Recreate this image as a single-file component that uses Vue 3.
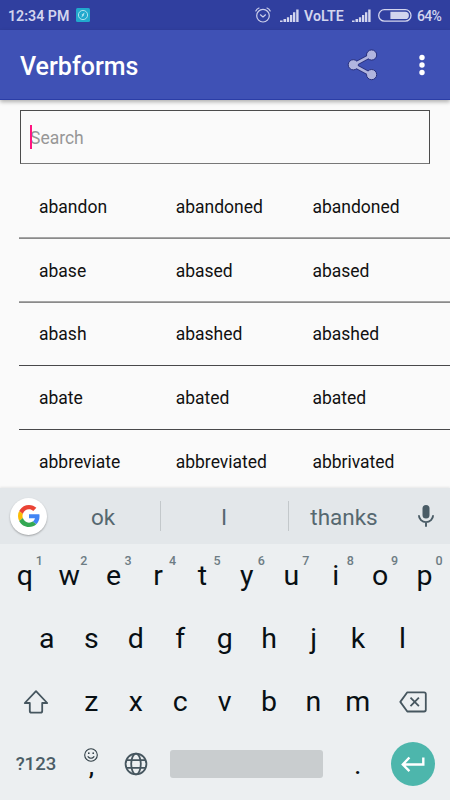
<template>
  <div class="screen">
    <div class="status-bar">
      <span class="clock">12:34 PM</span>
      <svg class="app-badge" viewBox="0 0 14 14" aria-hidden="true">
        <rect width="14" height="14" rx="1.5" fill="#21a9cd" />
        <circle cx="7" cy="7" r="4.6" fill="none" stroke="#b9e6f2" stroke-width="0.9" />
        <path d="M8.6 4.4 7.6 7.7 5.4 9.6 6.4 6.3z" fill="#b9e6f2" />
      </svg>
      <div class="status-right">
        <svg class="alarm" viewBox="0 0 16 16" aria-hidden="true">
          <g fill="none" stroke="#cdd0ec" stroke-width="1.2" stroke-linecap="round" stroke-linejoin="round">
            <circle cx="8" cy="8.7" r="6.3" />
            <path d="M5.4 7.8 8 10l2.5-2.2M.8 3.9Q1.8 1.8 4 1M15.2 3.9Q14.2 1.8 12 1" />
          </g>
        </svg>
        <svg class="signal" viewBox="0 0 19 13" aria-hidden="true">
          <path :d="SIGNAL" fill="#d3d5ee" />
        </svg>
        <span class="volte">VoLTE</span>
        <svg class="signal signal--second" viewBox="0 0 19 13" aria-hidden="true">
          <path :d="SIGNAL" fill="#d3d5ee" />
        </svg>
        <svg class="battery" viewBox="0 0 34 13" aria-hidden="true">
          <rect x=".7" y=".7" width="32.3" height="11.4" rx="5.7" fill="none" stroke="#d3d5ee" stroke-width="1.3" />
          <path d="M12.4 2.7h14.8a3.7 3.7 0 0 1 0 7.4H12.4z" fill="#d3d5ee" />
        </svg>
        <span class="percent">64%</span>
      </div>
    </div>

    <header class="app-bar">
      <h1 class="title">Verbforms</h1>
      <button class="icon-btn share" aria-label="Share">
        <svg width="32" height="34" viewBox="0 0 32 34">
          <path d="M24.1 7.4 6.3 17l17.8 9.6" fill="none" stroke="#28307c" stroke-width="4.4" />
          <g fill="#b1b5df" stroke="#28307c" stroke-width="1">
            <circle cx="24.6" cy="7" r="5.1" />
            <circle cx="6.3" cy="16.8" r="5.1" />
            <circle cx="24.6" cy="26.6" r="5.1" />
          </g>
          <path d="M24.1 7.4 6.3 17l17.8 9.6" fill="none" stroke="#b1b5df" stroke-width="2.7" />
        </svg>
      </button>
      <button class="icon-btn more" aria-label="More options">
        <svg width="8" height="22" viewBox="0 0 8 22" fill="#fff">
          <circle cx="4" cy="3.5" r="2.7" />
          <circle cx="4" cy="11" r="2.7" />
          <circle cx="4" cy="18.5" r="2.7" />
        </svg>
      </button>
    </header>

    <main class="content">
      <div class="search">
        <span class="caret"></span>
        <span class="placeholder">Search</span>
      </div>
      <ul class="verbs">
        <li v-for="verb in VERBS" :key="verb[0]" class="verb">
          <span v-for="(form, i) in verb" :key="i">{{ form }}</span>
        </li>
      </ul>
    </main>

    <section class="keyboard">
      <div class="suggestions">
        <div class="google">
          <svg width="22" height="22" viewBox="0 0 48 48" aria-hidden="true">
            <path fill="#ea4335" d="M24 9.5c3.54 0 6.71 1.22 9.21 3.6l6.85-6.85C35.9 2.38 30.47 0 24 0 14.62 0 6.51 5.38 2.56 13.22l7.98 6.19C12.43 13.72 17.74 9.5 24 9.5z" />
            <path fill="#4285f4" d="M46.98 24.55c0-1.57-.15-3.09-.38-4.55H24v9.02h12.94c-.58 2.96-2.26 5.48-4.78 7.18l7.73 6c4.51-4.18 7.09-10.36 7.09-17.65z" />
            <path fill="#fbbc05" d="M10.53 28.59c-.48-1.45-.76-2.99-.76-4.59s.27-3.14.76-4.59l-7.98-6.19C.92 16.46 0 20.12 0 24c0 3.88.92 7.54 2.56 10.78l7.97-6.19z" />
            <path fill="#34a853" d="M24 48c6.48 0 11.93-2.13 15.89-5.81l-7.73-6c-2.15 1.45-4.92 2.3-8.16 2.3-6.26 0-11.57-4.22-13.47-9.91l-7.98 6.19C6.51 42.62 14.62 48 24 48z" />
          </svg>
        </div>
        <span v-for="word in SUGGESTIONS" :key="word" class="word">{{ word }}</span>
        <svg class="mic" width="18" height="24" viewBox="0 0 18 24" aria-hidden="true">
          <rect x="5.5" y="1" width="7" height="13.6" rx="3.5" fill="#4a5c66" />
          <path d="M1.9 11.3a7.1 6.8 0 0 0 14.2 0M9 18v4.8" fill="none" stroke="#4a5c66" stroke-width="1.9" />
        </svg>
      </div>

      <div class="keys">
        <div class="row">
          <button v-for="(letter, i) in 'qwertyuiop'" :key="letter" class="key">
            {{ letter }}<sup class="hint">{{ (i + 1) % 10 }}</sup>
          </button>
        </div>
        <div class="row row--inset">
          <button v-for="letter in 'asdfghjkl'" :key="letter" class="key">{{ letter }}</button>
        </div>
        <div class="row">
          <button class="key key--wide" aria-label="Shift">
            <svg width="26" height="26" viewBox="0 0 26 26">
              <path d="M13 2.2 1.8 14h5v7.9q0 1.7 1.7 1.7h9q1.7 0 1.7-1.7V14h5z" fill="none" stroke="#46565f" stroke-width="1.8" stroke-linejoin="round" />
            </svg>
          </button>
          <button v-for="letter in 'zxcvbnm'" :key="letter" class="key">{{ letter }}</button>
          <button class="key key--wide" aria-label="Delete">
            <svg width="28" height="22" viewBox="0 0 28 22">
              <g fill="none" stroke="#46565f" stroke-width="1.8" stroke-linejoin="round">
                <path d="M8.3 1.3h16.8q1.7 0 1.7 1.7v15.8q0 1.7-1.7 1.7H8.3L1.3 10.9z" />
                <path d="m11.5 6.7 8.4 8.4m0-8.4-8.4 8.4" />
              </g>
            </svg>
          </button>
        </div>
        <div class="row row--bottom">
          <button class="key key--wide key--symbols">?123</button>
          <button class="key key--comma">
            <svg width="14" height="14" viewBox="0 0 14 14" aria-hidden="true">
              <circle cx="7" cy="7" r="6.3" fill="none" stroke="#2f3d45" stroke-width="1.1" />
              <circle cx="4.8" cy="5.2" r=".85" fill="#2f3d45" />
              <circle cx="9.2" cy="5.2" r=".85" fill="#2f3d45" />
              <path d="M3.7 8.3q3.3 4 6.6 0" fill="none" stroke="#2f3d45" stroke-width="1.1" />
            </svg>
            <span class="comma">,</span>
          </button>
          <button class="key" aria-label="Change language">
            <svg width="24" height="24" viewBox="0 0 24 24">
              <g fill="none" stroke="#46565f" stroke-width="1.8">
                <circle cx="12" cy="12" r="10.4" />
                <ellipse cx="12" cy="12" rx="4.8" ry="10.4" />
                <path d="M2.4 8.2h19.2M2.4 15.8h19.2" />
              </g>
            </svg>
          </button>
          <button class="key key--space" aria-label="Space"><span class="space-bar"></span></button>
          <button class="key key--period">.</button>
          <button class="key key--wide" aria-label="Enter">
            <span class="enter">
              <svg width="26" height="18" viewBox="0 0 26 18">
                <path d="M23.3 2.5v7H3.4M9.4 2.5 2.8 9.5l6.6 6.7" fill="none" stroke="#fff" stroke-width="2.4" />
              </svg>
            </span>
          </button>
        </div>
      </div>
    </section>
  </div>
</template>

<script setup>
const SIGNAL = 'M0 13v-1.6h2.6V13zM3.5 13v-3h2.6v3zM6.9 13V8.3h2.3V13zM10 13V6h2.3v7zM13 13V3.3h2.3V13zM16.2 13V.6h2.4V13z';

const VERBS = [
  ['abandon', 'abandoned', 'abandoned'],
  ['abase', 'abased', 'abased'],
  ['abash', 'abashed', 'abashed'],
  ['abate', 'abated', 'abated'],
  ['abbreviate', 'abbreviated', 'abbrivated'],
];

const SUGGESTIONS = ['ok', 'I', 'thanks'];
</script>

<style>
body { margin: 0; }
</style>

<style scoped>
*, *::before, *::after { box-sizing: border-box; margin: 0; padding: 0; }
.screen { display: flex; flex-direction: column; width: 450px; height: 800px; overflow: hidden; background: #fafafa; color: #111; font-family: Roboto, sans-serif; }
button { border: none; background: transparent; font: inherit; color: inherit; }
svg { display: block; flex: none; }

.status-bar { display: flex; align-items: center; height: 30px; flex: none; padding: 0 8px; background: #303f9f; color: #d3d5ee; font-size: 14.2px; font-weight: 600; }
.clock { width: 68px; padding-top: 1px; white-space: nowrap; }
.app-badge { width: 14px; height: 14px; }
.status-right { display: flex; align-items: center; margin-left: auto; }
.alarm { width: 16px; height: 16px; margin-right: 9px; }
.signal { width: 19px; height: 13px; margin-right: 5px; }
.signal--second { margin-left: 8px; margin-right: 7px; }
.battery { width: 34px; height: 13px; margin-right: 5px; }
.volte { width: 40px; padding-top: 1px; white-space: nowrap; }
.percent { width: 25px; padding-top: 1px; font-size: 14px; font-weight: 500; letter-spacing: -0.7px; white-space: nowrap; }

.app-bar { position: relative; z-index: 1; display: flex; align-items: center; height: 70px; flex: none; padding: 0 24px 0 20px; background: #3f51b5; border-bottom: 1px solid #2b3da6; box-shadow: 0 2px 4px rgba(0, 0, 0, 0.3); }
.title { flex: 1; padding-top: 4px; font-size: 25px; font-weight: 500; color: #fff; }
.share { margin-right: 39px; }

.content { flex: 1; min-height: 0; overflow: hidden; padding-top: 10px; }
.search { position: relative; display: flex; align-items: center; height: 53.5px; margin: 0 20px; padding: 2px 0 0 9px; border: 1px solid #4c4c4c; border-bottom-color: #777; font-size: 17.5px; color: #979797; }
.caret { position: absolute; left: 9px; top: 14px; width: 2px; height: 24px; background: #ff1480; }
.verbs { list-style: none; padding-top: 11.5px; }
.verb { display: grid; grid-template-columns: 136.7px 136.7px 1fr; align-items: center; height: 63.75px; margin-left: 19px; padding: 1px 0 0 20px; border-bottom: 1px solid #48484a; font-size: 17.5px; }
/* the first dividers fall between two pixel rows */
.verb:nth-child(-n + 2) { border-bottom-color: #8a8a8a; box-shadow: inset 0 -1px #a6a6a6; }

.keyboard { display: flex; flex-direction: column; height: 312px; flex: none; background: #eceff1; box-shadow: 0 -1px 2px rgba(0, 0, 0, 0.08); }
.suggestions { display: flex; align-items: center; height: 56px; flex: none; padding: 0 15px 0 10px; background: #e3e7ea; }
.google { display: flex; align-items: center; justify-content: center; width: 37px; height: 37px; border-radius: 50%; background: #fff; box-shadow: 0 1px 2px rgba(0, 0, 0, 0.3); }
.word { display: flex; align-items: center; justify-content: center; width: 127px; height: 30px; padding-top: 1px; font-size: 22.5px; color: #566870; }
.word:nth-child(2) { width: 113px; padding-right: 1px; }
.word:nth-child(n + 3) { border-left: 1px solid #c3c8cb; }
.word:nth-child(3) { width: 128px; padding-right: 1px; }
.word:nth-child(4) { width: 111px; }
.mic { margin-left: auto; }

.keys { display: grid; grid-template-rows: repeat(4, 63px); padding: 0 3.4px 0 2.6px; }
.row { display: flex; }
.row--inset { padding: 0 22px; }
.row--bottom { padding-bottom: 2px; }
.key { position: relative; display: flex; align-items: center; justify-content: center; flex: 1; font-size: 28.5px; color: #080f14; }
.key--wide { flex: 1.5; }
.key--symbols { font-size: 18.5px; font-weight: 500; color: #4b5d67; }
.key--comma { flex-direction: column; }
.key--space { flex: 4; }
.key--period { padding-top: 2px; }
.hint { position: absolute; left: 33.2px; top: 8.5px; font-size: 12.5px; line-height: 15px; font-weight: 500; color: #6d7c84; }
.comma { height: 18px; font-size: 24px; line-height: 10px; font-weight: 500; }
.space-bar { width: 153px; height: 28px; border-radius: 3px; background: #c9cdcf; }
.enter { display: flex; align-items: center; justify-content: center; flex: none; width: 44px; height: 44px; border-radius: 50%; background: #4db6ac; }
</style>
